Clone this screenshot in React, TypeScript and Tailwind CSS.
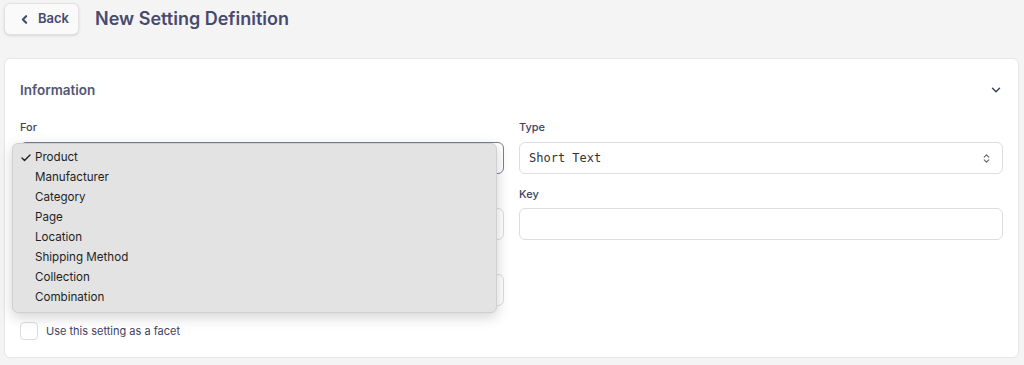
import { Check, ChevronDown, ChevronLeft, ChevronsUpDown } from 'lucide-react';

const forOptions = [
  'Product',
  'Manufacturer',
  'Category',
  'Page',
  'Location',
  'Shipping Method',
  'Collection',
  'Combination',
];

function Label({ children }: { children?: React.ReactNode }) {
  return <div className="h-4 text-[11px] font-medium leading-4 text-[#3f4260]">{children}</div>;
}

export default function App() {
  return (
    <div className="min-h-[365px] bg-[#f4f4f4] pl-1 pr-[5px] pt-[3px] font-['Inter',sans-serif]">
      {/* Header */}
      <div className="flex h-8 items-center gap-4">
        <button className="flex h-8 w-[75px] items-center gap-[7px] rounded-md border border-[#e2e2e6] bg-[#fafafa] pl-[13px] text-[13px] font-semibold text-[#474b6e] shadow-sm">
          <ChevronLeft size={13} strokeWidth={4} />
          Back
        </button>
        <h1 className="text-lg font-semibold text-[#474b6e]">New Setting Definition</h1>
      </div>

      {/* Information card */}
      <div className="mt-[23px] rounded-md border border-[#e6e6e9] bg-white px-[15px] pb-[17px] pt-4">
        <div className="flex h-[30px] items-center justify-between">
          <h2 className="text-[13.5px] font-semibold text-[#525675]">Information</h2>
          <ChevronDown size={14} strokeWidth={2.5} className="text-[#3f4260]" />
        </div>

        <div className="mt-[14px] grid grid-cols-2 gap-x-[15px]">
          <div>
            <div className="mb-[7px]">
              <Label>For</Label>
            </div>
            <div className="relative">
              <div className="h-8 rounded-md border border-[#7b7e99] bg-white" />
              {/* Open native menu */}
              <div className="absolute left-[-8px] top-[1px] z-10 w-[485px] rounded-md border border-[#d0d0d0] bg-[#e3e3e3] py-1 shadow-[0_4px_14px_rgba(0,0,0,0.18)]">
                {forOptions.map((option, index) => (
                  <div
                    key={option}
                    className="flex h-5 items-center pl-[7px] text-[11.6px] text-[#1f1f1f]"
                  >
                    <span className="w-[15px]">
                      {index === 0 && <Check size={12} strokeWidth={2.75} />}
                    </span>
                    {option}
                  </div>
                ))}
              </div>
            </div>
            <div className="mb-[6px] mt-3">
              <Label />
            </div>
            <div className="h-8 rounded-md border border-[#dcdde3]" />
            <div className="mb-[6px] mt-3">
              <Label />
            </div>
            <div className="h-8 rounded-md border border-[#dcdde3]" />
          </div>

          <div>
            <div className="mb-[7px]">
              <Label>Type</Label>
            </div>
            <div className="flex h-8 items-center justify-between rounded-md border border-[#dcdde3] pl-[9px] pr-[10px]">
              <span className="font-['DejaVu_Sans_Mono',monospace] text-xs text-[#333]">
                Short Text
              </span>
              <ChevronsUpDown size={11} strokeWidth={2.5} className="text-[#666]" />
            </div>
            <div className="mb-[6px] mt-3">
              <Label>Key</Label>
            </div>
            <div className="h-8 rounded-md border border-[#dcdde3]" />
          </div>
        </div>

        <label className="mt-4 flex items-center gap-2">
          <span className="h-[18px] w-[18px] rounded border border-[#dcdde3] bg-white" />
          <span className="text-[11px] text-[#3f4260]">Use this setting as a facet</span>
        </label>
      </div>
    </div>
  );
}
